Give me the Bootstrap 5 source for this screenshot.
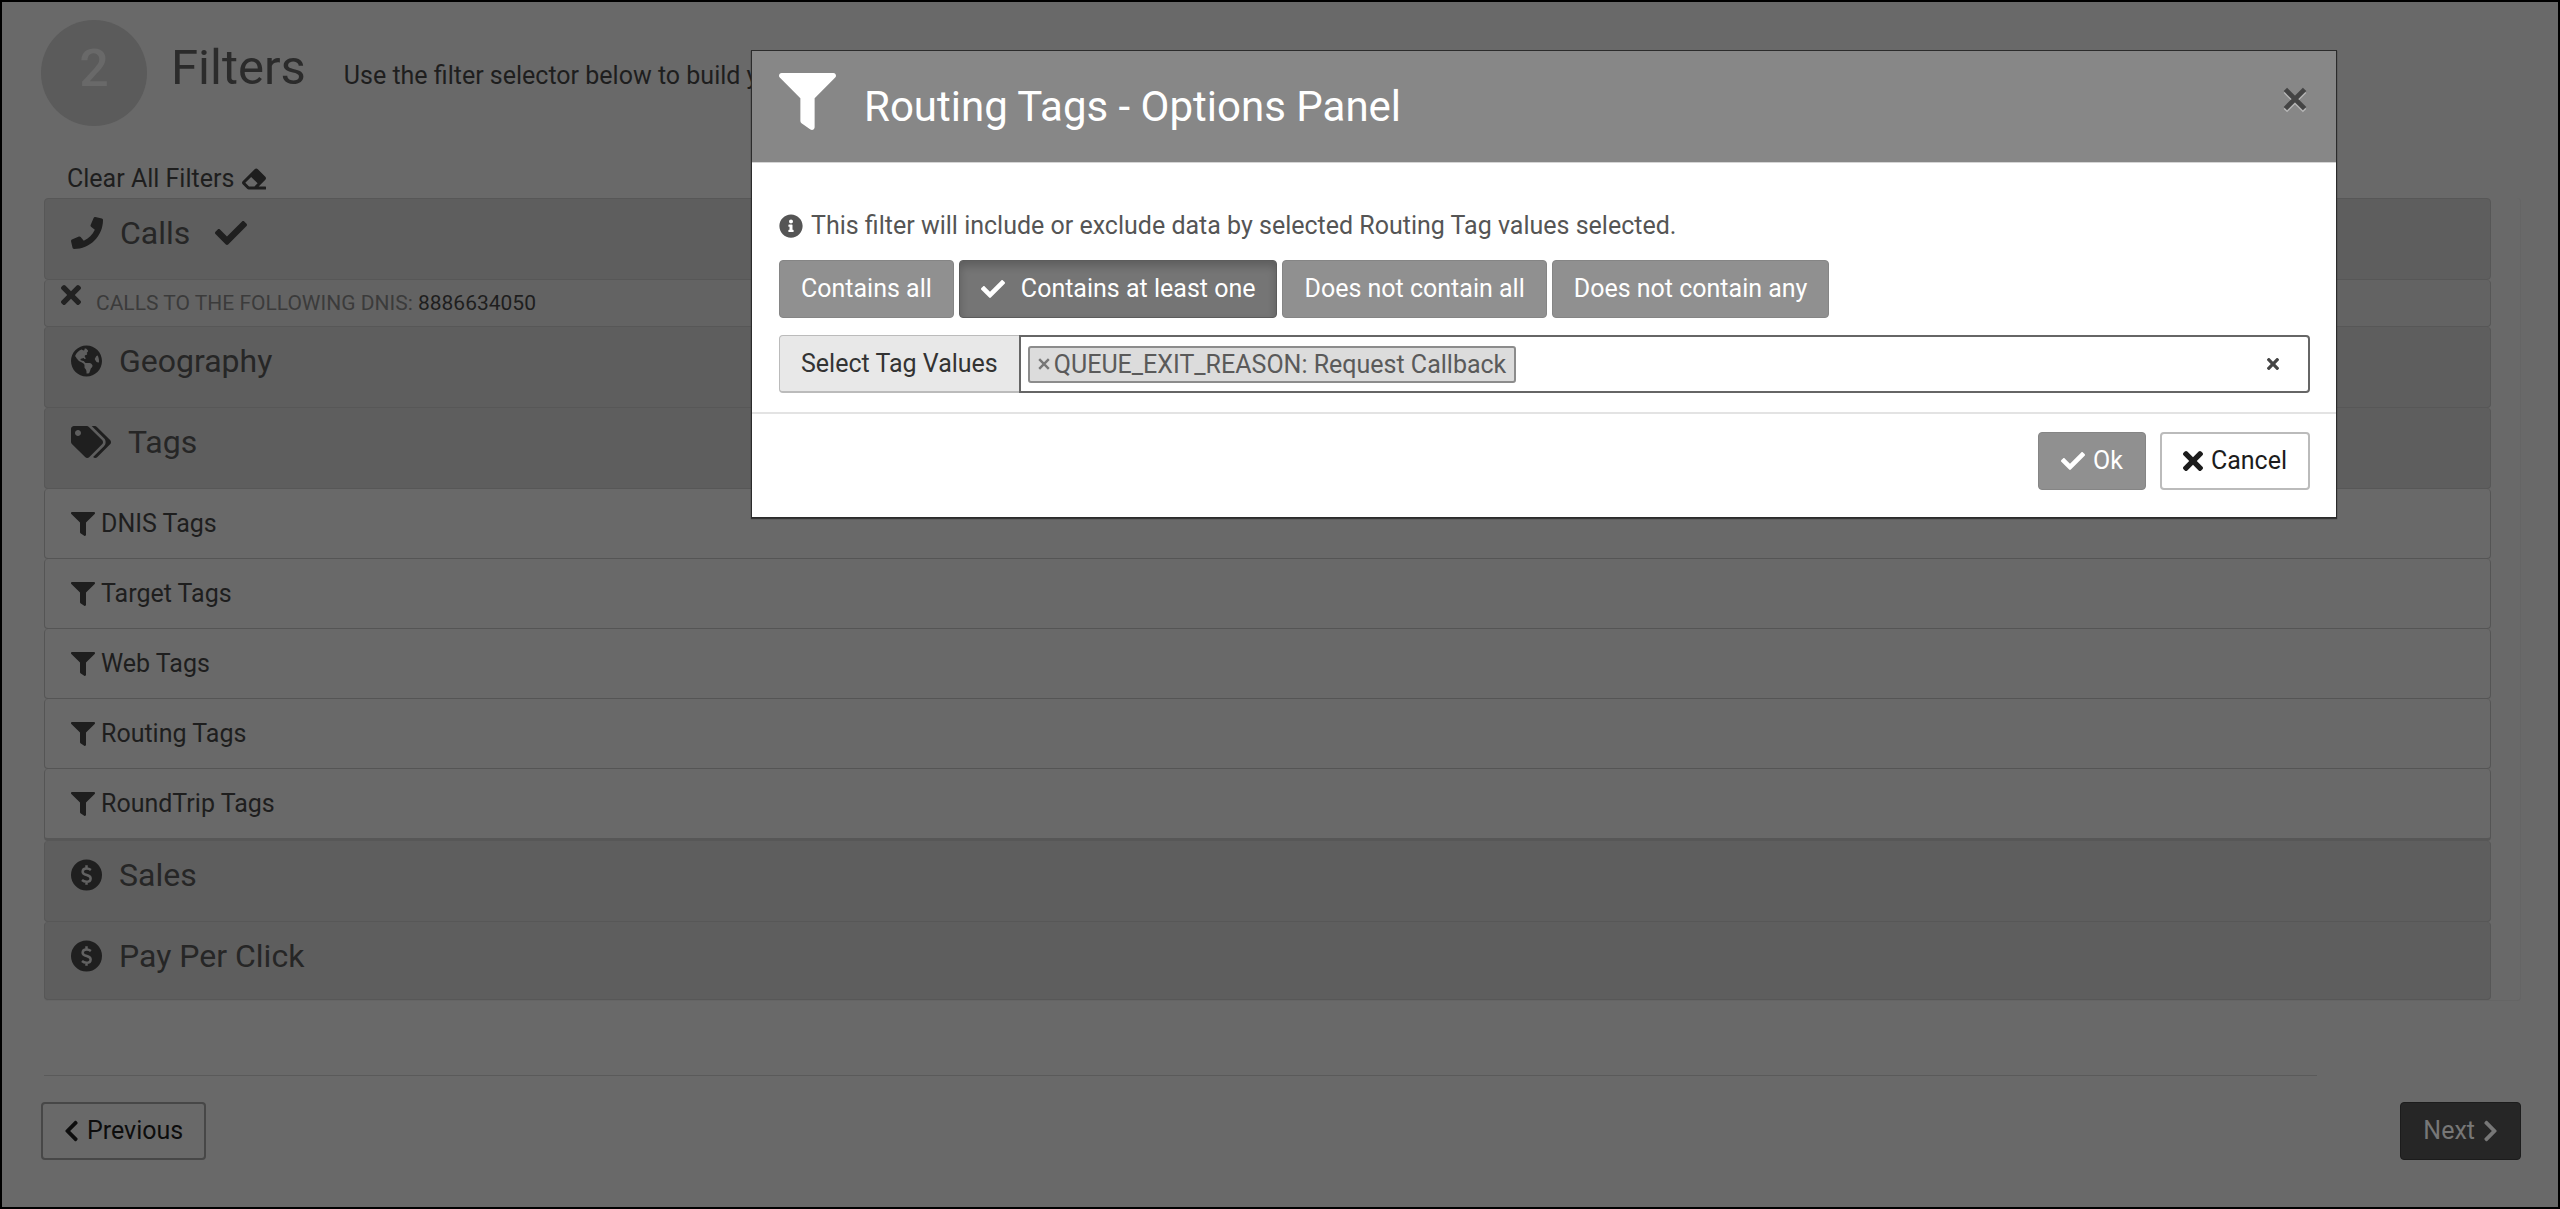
<!DOCTYPE html>
<html lang="en">
<head>
<meta charset="utf-8">
<meta name="viewport" content="width=device-width, initial-scale=1">
<title>Filters</title>
<link href="https://cdn.jsdelivr.net/npm/bootstrap@5.3.0/dist/css/bootstrap.min.css" rel="stylesheet">
<style>
body{font-family:Roboto,"Liberation Sans",sans-serif;font-size:25px;line-height:34px;color:#1e1e1e;background:#696969}
.page-frame{min-height:100vh;border:2px solid #000;padding:18px 37px 24px 39px}
.ico{height:1em;width:auto;fill:currentColor;flex:none;display:block}
.step-num{width:106px;height:106px;background:#5b5b5b;color:#696969;font-size:52px;font-weight:500}
.step-title{font-size:49px;line-height:60px;font-weight:400;color:#2b2b2b}
.step-head{gap:24px}
.step-text{gap:38px;padding-top:18px}
.clear-link{color:#1e1e1e;text-decoration:none;padding-left:26px;margin-top:36px}
.filter-box{margin:2px 0 0 3px;padding-right:29px;border:1px solid #656565;border-width:0 1px 1px 0;border-radius:4px}
.filter-list{--bs-list-group-bg:transparent;--bs-list-group-border-color:#555;--bs-list-group-color:#1e1e1e;--bs-list-group-border-radius:4px}
.sect{background:#5e5e5e;font-size:32px;line-height:40px;padding:14px 26px 26px;color:#262626;gap:17px;border-color:#575757;border-radius:4px}
.sect .ico{color:#1f1f1f}
.sect:last-child{padding-bottom:23px}
.leaf{padding:18px 26px 17px;gap:6px;border-radius:4px}
.leaf-end{border-bottom:3px solid #575757}
.chosen{background:#636363;font-size:21px;line-height:26px;padding:10px 16px;gap:15px;color:#1e1e1e;border-color:#575757;border-radius:4px}
.chosen span{color:#3b3b3b}
.chosen .x-btn{color:#222;margin-top:-5px}
.btn{--bs-btn-font-size:25px;--bs-btn-line-height:34px;--bs-btn-padding-y:11px;--bs-btn-padding-x:21px;--bs-btn-border-radius:4px}
.btn-prev{--bs-btn-color:#0d0d0d;--bs-btn-border-color:#474747;--bs-btn-bg:#696969;border-width:2px;--bs-btn-padding-y:10px}
.btn-next{--bs-btn-color:#777;--bs-btn-bg:#262626;--bs-btn-border-color:#1c1c1c;--bs-btn-padding-x:22px}
.foot-rule{margin:74px 204px 26px 3px;border-top:1px solid #5a5a5a;opacity:1}
.opt-dialog{position:absolute;top:50px;left:751px;right:223px;max-width:none;margin:0}
.opt-dialog .modal-content{background:#fff;border:1px solid #2b2b2b;border-radius:0;color:#555;box-shadow:0 1px 1px #333}
.opt-dialog .modal-header{background:#878787;color:#fff;height:112px;padding:0 29px 0 27px;border-bottom:1px solid #d5d5d5;border-radius:0;gap:28px;align-items:flex-start}
.opt-dialog .modal-title{font-size:42px;line-height:50px;font-weight:400;padding-top:31px}
.head-ico{font-size:57px;margin-top:22px}
.head-x{margin-top:36px;filter:drop-shadow(0 2px 0 #b5b5b5)}
.x-btn{background:none;border:0;padding:0;color:#444;line-height:1}
.opt-dialog .modal-body{padding:46px 26px 19px 27px}
.btn-opt{--bs-btn-color:#fff;--bs-btn-bg:#909090;--bs-btn-border-color:#858585;--bs-btn-active-bg:#757575;--bs-btn-active-border-color:#5c5c5c;--bs-btn-active-color:#fff}
.btn-opt.active{box-shadow:inset 0 5px 8px rgba(0,0,0,.2)}
.opt-row{gap:5px;margin:17px 0}
.tag-label{background:#e8e8e8;border:1px solid #bbb;border-bottom-width:2px;border-radius:4px 0 0 4px;color:#333;font-size:25px;padding:0 21px;line-height:32px}
.tag-field{background:#fff;border:2px solid #666;border-radius:4px;height:58px;padding:0 29px 0 7px}
.tag-chip{background:#dcdcdc;border:2px solid #8c8c8c;border-radius:3px;height:37px;padding:0 8px;line-height:33px;gap:4px;color:#5a5a5a}
.tag-chip .x-btn{color:#777}
.tag-entry{border:0;outline:0;background:transparent;min-width:0}
.opt-dialog .modal-footer{padding:18px 26px 27px;border-top:2px solid #e3e3e3;gap:14px}
.opt-dialog .modal-footer>*{margin:0}
.opt-dialog .modal-footer .btn-opt{--bs-btn-padding-x:22px}
.btn-cancel{--bs-btn-color:#1c1c1c;--bs-btn-bg:#fff;--bs-btn-border-color:#bbb;border-width:2px;--bs-btn-padding-y:10px}
.s-12{font-size:12px}.s-20{font-size:20px}.s-24{font-size:24px}.s-32{font-size:32px}
</style>
</head>
<body>
<svg width="0" height="0" class="d-none" aria-hidden="true">
<symbol id="check" viewBox="0 0 512 512"><path d="M173.898 439.404l-166.4-166.4c-9.997-9.997-9.997-26.206 0-36.204l36.203-36.204c9.997-9.998 26.207-9.998 36.204 0L192 312.69 432.095 72.596c9.997-9.997 26.207-9.997 36.204 0l36.203 36.204c9.997 9.997 9.997 26.206 0 36.204l-294.4 294.401c-9.998 9.997-26.207 9.997-36.204-.001z"/></symbol>
<symbol id="times" viewBox="0 80 352 352"><path d="M242.72 256l100.07-100.07c12.28-12.28 12.28-32.19 0-44.48l-22.24-22.24c-12.28-12.28-32.19-12.28-44.48 0L176 189.28 75.93 89.21c-12.28-12.28-32.19-12.28-44.48 0L9.21 111.45c-12.28 12.28-12.28 32.19 0 44.48L109.28 256 9.21 356.07c-12.28 12.28-12.28 32.19 0 44.48l22.24 22.24c12.28 12.28 32.2 12.28 44.48 0L176 322.72l100.07 100.07c12.28 12.28 32.2 12.28 44.48 0l22.24-22.24c12.28-12.28 12.28-32.19 0-44.48L242.72 256z"/></symbol>
<symbol id="thin-x" viewBox="0 0 20 20"><path d="M2 2l16 16M18 2L2 18" stroke="currentColor" stroke-width="4" fill="none"/></symbol>
<symbol id="funnel" viewBox="0 0 512 512"><path d="M487.976 0H24.028C2.71 0-8.047 25.866 7.058 40.971L192 225.941V432c0 7.831 3.821 15.17 10.237 19.662l80 55.98C298.02 518.69 320 507.493 320 487.98V225.941l184.947-184.97C520.021 25.896 509.338 0 487.976 0z"/></symbol>
<symbol id="phone" viewBox="0 0 512 512"><path d="M493.4 24.6l-104-24c-11.3-2.6-22.9 3.3-27.5 13.9l-48 112c-4.2 9.8-1.4 21.3 6.9 28l60.6 49.6c-36 76.7-98.9 140.5-177.2 177.2l-49.6-60.6c-6.8-8.3-18.2-11.1-28-6.9l-112 48C3.9 366.5-2 378.1.6 389.4l24 104C27.1 504.2 36.7 512 48 512c256.1 0 464-207.5 464-464 0-11.2-7.7-20.9-18.6-23.4z"/></symbol>
<symbol id="info" viewBox="0 0 512 512"><path d="M256 8C119.043 8 8 119.083 8 256c0 136.997 111.043 248 248 248s248-111.003 248-248C504 119.083 392.957 8 256 8zm0 110c23.196 0 42 18.804 42 42s-18.804 42-42 42-42-18.804-42-42 18.804-42 42-42zm56 254c0 6.627-5.373 12-12 12h-88c-6.627 0-12-5.373-12-12v-24c0-6.627 5.373-12 12-12h12v-64h-12c-6.627 0-12-5.373-12-12v-24c0-6.627 5.373-12 12-12h64c6.627 0 12 5.373 12 12v100h12c6.627 0 12 5.373 12 12v24z"/></symbol>
<symbol id="tags" viewBox="0 0 640 512"><path d="M497.941 225.941L286.059 14.059A48 48 0 0 0 252.118 0H48C21.49 0 0 21.49 0 48v204.118a48 48 0 0 0 14.059 33.941l211.882 211.882c18.744 18.745 49.136 18.746 67.882 0l204.118-204.118c18.745-18.745 18.745-49.137 0-67.882zM112 160c-26.51 0-48-21.49-48-48s21.49-48 48-48 48 21.49 48 48-21.49 48-48 48zm513.941 133.823L421.823 497.941c-18.745 18.745-49.137 18.745-67.882 0l-.36-.36L527.64 323.522c16.999-16.999 26.36-39.6 26.36-63.64s-9.362-46.641-26.36-63.64L331.397 0h48.721a48 48 0 0 1 33.941 14.059l211.882 211.882c18.745 18.745 18.745 49.137 0 67.882z"/></symbol>
<symbol id="chev" viewBox="0 0 320 512"><path d="M34.52 239.03L228.87 44.69c9.37-9.37 24.57-9.37 33.94 0l22.67 22.67c9.36 9.36 9.37 24.52.04 33.9L131.49 256l154.02 154.75c9.34 9.38 9.32 24.54-.04 33.9l-22.67 22.67c-9.37 9.37-24.57 9.37-33.94 0L34.52 272.97c-9.37-9.37-9.37-24.57 0-33.94z"/></symbol>
<symbol id="chev-r" viewBox="0 0 320 512"><path d="M285.48 239.03L91.13 44.69c-9.37-9.37-24.57-9.37-33.94 0L34.52 67.36c-9.36 9.36-9.37 24.52-.04 33.9L188.51 256 34.49 410.75c-9.34 9.38-9.32 24.54.04 33.9l22.67 22.67c9.37 9.37 24.57 9.37 33.94 0l194.34-194.35c9.37-9.37 9.37-24.57 0-33.94z"/></symbol>
<symbol id="eraser" viewBox="0 0 512 512"><path d="M497.941 273.941c18.745-18.745 18.745-49.137 0-67.882l-160-160c-18.745-18.745-49.136-18.746-67.883 0l-256 256c-18.745 18.745-18.745 49.137 0 67.882l96 96A48.004 48.004 0 0 0 144 480h356c6.627 0 12-5.373 12-12v-40c0-6.627-5.373-12-12-12H355.883l142.058-142.059zm-302.627-62.627l137.373 137.373L265.373 416H150.628l-80-80 124.686-124.686z"/></symbol>
<symbol id="globe" viewBox="0 0 496 512"><path d="M248 8C111.03 8 0 119.03 0 256s111.03 248 248 248 248-111.03 248-248S384.97 8 248 8zm82.29 357.6c-3.9 3.88-7.99 7.95-11.31 11.28-2.99 3-5.1 6.7-6.17 10.71-1.51 5.66-2.73 11.38-4.77 16.87l-17.39 46.85c-13.76 3-28 4.69-42.65 4.69v-27.38c1.69-12.62-7.64-36.26-22.63-51.25-6-6-9.37-14.14-9.37-22.63v-32.01c0-11.64-6.27-22.34-16.46-27.97-14.37-7.95-34.81-19.06-48.81-26.11-11.48-5.78-22.1-13.14-31.65-21.75l-.8-.72a114.792 114.792 0 0 1-18.06-20.74c-9.38-13.77-24.66-36.42-34.59-51.14 20.47-45.5 57.36-82.04 103.2-101.89l24.01 12.01C203.48 89.74 216 82.01 216 70.11v-11.3c7.99-1.29 16.12-2.11 24.39-2.42l28.3 28.3c6.25 6.25 6.25 16.38 0 22.63L264 112l-10.34 10.34c-3.12 3.12-3.12 8.19 0 11.31l4.69 4.69c3.12 3.12 3.12 8.19 0 11.31l-8 8a8.008 8.008 0 0 1-5.66 2.34h-8.99c-2.08 0-4.08.81-5.58 2.27l-9.92 9.65a8.008 8.008 0 0 0-1.58 9.31l15.59 31.19c2.66 5.32-1.21 11.58-7.15 11.58h-5.64c-1.93 0-3.79-.7-5.24-1.96l-9.28-8.06a16.017 16.017 0 0 0-15.55-3.1l-31.17 10.39a11.95 11.95 0 0 0-8.17 11.34c0 4.53 2.56 8.66 6.61 10.69l11.08 5.54c9.41 4.71 19.79 7.16 30.31 7.16s22.59 27.29 32 32h66.75c8.49 0 16.62 3.37 22.63 9.37l13.69 13.69a30.503 30.503 0 0 1 8.93 21.57 46.536 46.536 0 0 1-13.72 32.98zM417 274.25c-5.79-1.45-10.84-5-14.15-9.97l-17.98-26.97a23.97 23.97 0 0 1 0-26.62l19.59-29.38c2.32-3.47 5.5-6.29 9.24-8.15l12.98-6.49C440.2 193.59 448 223.87 448 256c0 8.67-.74 17.16-1.82 25.54L417 274.25z"/></symbol>
<symbol id="coin" viewBox="0 0 496 512"><circle cx="248" cy="256" r="248"/><path d="M248 100v50M248 362v50M318 176c-20-16-44-24-68-24-36 0-64 20-64 50 0 70 128 40 128 108 0 32-28 52-66 52-28 0-52-8-72-26" fill="none" stroke="#626262" stroke-width="40"/></symbol>
</svg>

<main class="page-frame">
  <header class="d-flex step-head">
    <div class="step-num rounded-circle d-flex flex-shrink-0 justify-content-center align-items-center pb-2">2</div>
    <div class="d-flex align-items-baseline step-text">
      <h1 class="step-title mb-0">Filters</h1>
      <p class="mb-0">Use the filter selector below to build your report.</p>
    </div>
  </header>

  <a href="#" class="clear-link d-flex align-items-center gap-2">Clear All Filters <svg class="ico s-24" viewBox="0 0 512 512"><use href="#eraser"/></svg></a>

  <section class="filter-box">
    <ul class="list-group filter-list">
      <li class="list-group-item sect d-flex align-items-center"><svg class="ico s-32" viewBox="0 0 512 512"><use href="#phone"/></svg>Calls<svg class="ico s-32 ms-2" viewBox="0 0 512 512"><use href="#check"/></svg></li>
      <li class="list-group-item chosen d-flex"><button type="button" class="x-btn align-self-start" aria-label="Remove filter"><svg class="ico s-20" viewBox="0 0 352 352"><use href="#times"/></svg></button><div><span>CALLS TO THE FOLLOWING DNIS:</span> 8886634050</div></li>
      <li class="list-group-item sect d-flex align-items-center"><svg class="ico s-32" viewBox="0 0 496 512"><use href="#globe"/></svg>Geography</li>
      <li class="list-group-item sect d-flex align-items-center"><svg class="ico s-32" viewBox="0 0 640 512"><use href="#tags"/></svg>Tags</li>
      <li class="list-group-item leaf d-flex align-items-center"><svg class="ico s-24" viewBox="0 0 512 512"><use href="#funnel"/></svg>DNIS Tags</li>
      <li class="list-group-item leaf d-flex align-items-center"><svg class="ico s-24" viewBox="0 0 512 512"><use href="#funnel"/></svg>Target Tags</li>
      <li class="list-group-item leaf d-flex align-items-center"><svg class="ico s-24" viewBox="0 0 512 512"><use href="#funnel"/></svg>Web Tags</li>
      <li class="list-group-item leaf d-flex align-items-center"><svg class="ico s-24" viewBox="0 0 512 512"><use href="#funnel"/></svg>Routing Tags</li>
      <li class="list-group-item leaf leaf-end d-flex align-items-center"><svg class="ico s-24" viewBox="0 0 512 512"><use href="#funnel"/></svg>RoundTrip Tags</li>
      <li class="list-group-item sect d-flex align-items-center"><svg class="ico s-32" viewBox="0 0 496 512"><use href="#coin"/></svg>Sales</li>
      <li class="list-group-item sect d-flex align-items-center"><svg class="ico s-32" viewBox="0 0 496 512"><use href="#coin"/></svg>Pay Per Click</li>
    </ul>
  </section>

  <hr class="foot-rule">
  <div class="d-flex justify-content-between">
    <button type="button" class="btn btn-prev d-flex align-items-center gap-2"><svg class="ico s-24" viewBox="0 0 320 512"><use href="#chev"/></svg>Previous</button>
    <button type="button" class="btn btn-next d-flex align-items-center gap-2">Next <svg class="ico s-24" viewBox="0 0 320 512"><use href="#chev-r"/></svg></button>
  </div>
</main>

<div class="modal-dialog opt-dialog" role="dialog" aria-labelledby="optTitle">
  <div class="modal-content">
    <div class="modal-header">
      <svg class="ico head-ico" viewBox="0 0 512 512"><use href="#funnel"/></svg>
      <h2 class="modal-title" id="optTitle">Routing Tags - Options Panel</h2>
      <button type="button" class="x-btn head-x ms-auto" aria-label="Close"><svg class="ico s-24" viewBox="0 0 20 20"><use href="#thin-x"/></svg></button>
    </div>
    <div class="modal-body">
      <div class="d-flex align-items-center gap-2"><svg class="ico s-24" viewBox="0 0 512 512"><use href="#info"/></svg>This filter will include or exclude data by selected Routing Tag values selected.</div>
      <div class="d-flex opt-row">
        <button type="button" class="btn btn-opt">Contains all</button>
        <button type="button" class="btn btn-opt active d-flex align-items-center gap-3"><svg class="ico s-24" viewBox="0 0 512 512"><use href="#check"/></svg>Contains at least one</button>
        <button type="button" class="btn btn-opt">Does not contain all</button>
        <button type="button" class="btn btn-opt">Does not contain any</button>
      </div>
      <div class="input-group flex-nowrap">
        <label class="input-group-text tag-label" for="tagValues">Select Tag Values</label>
        <div class="tag-field flex-grow-1 d-flex align-items-center">
          <span class="tag-chip d-flex align-items-center"><button type="button" class="x-btn" aria-label="Remove value"><svg class="ico s-12" viewBox="0 0 20 20"><use href="#thin-x"/></svg></button>QUEUE_EXIT_REASON: Request Callback</span>
          <input type="text" id="tagValues" class="tag-entry flex-grow-1">
          <button type="button" class="x-btn" aria-label="Clear values"><svg class="ico s-12" viewBox="0 0 352 352"><use href="#times"/></svg></button>
        </div>
      </div>
    </div>
    <div class="modal-footer">
      <button type="button" class="btn btn-opt d-flex align-items-center gap-2"><svg class="ico s-24" viewBox="0 0 512 512"><use href="#check"/></svg>Ok</button>
      <button type="button" class="btn btn-cancel d-flex align-items-center gap-2"><svg class="ico s-20" viewBox="0 0 352 352"><use href="#times"/></svg>Cancel</button>
    </div>
  </div>
</div>
<script src="https://cdn.jsdelivr.net/npm/bootstrap@5.3.0/dist/js/bootstrap.bundle.min.js"></script>
</body>
</html>
